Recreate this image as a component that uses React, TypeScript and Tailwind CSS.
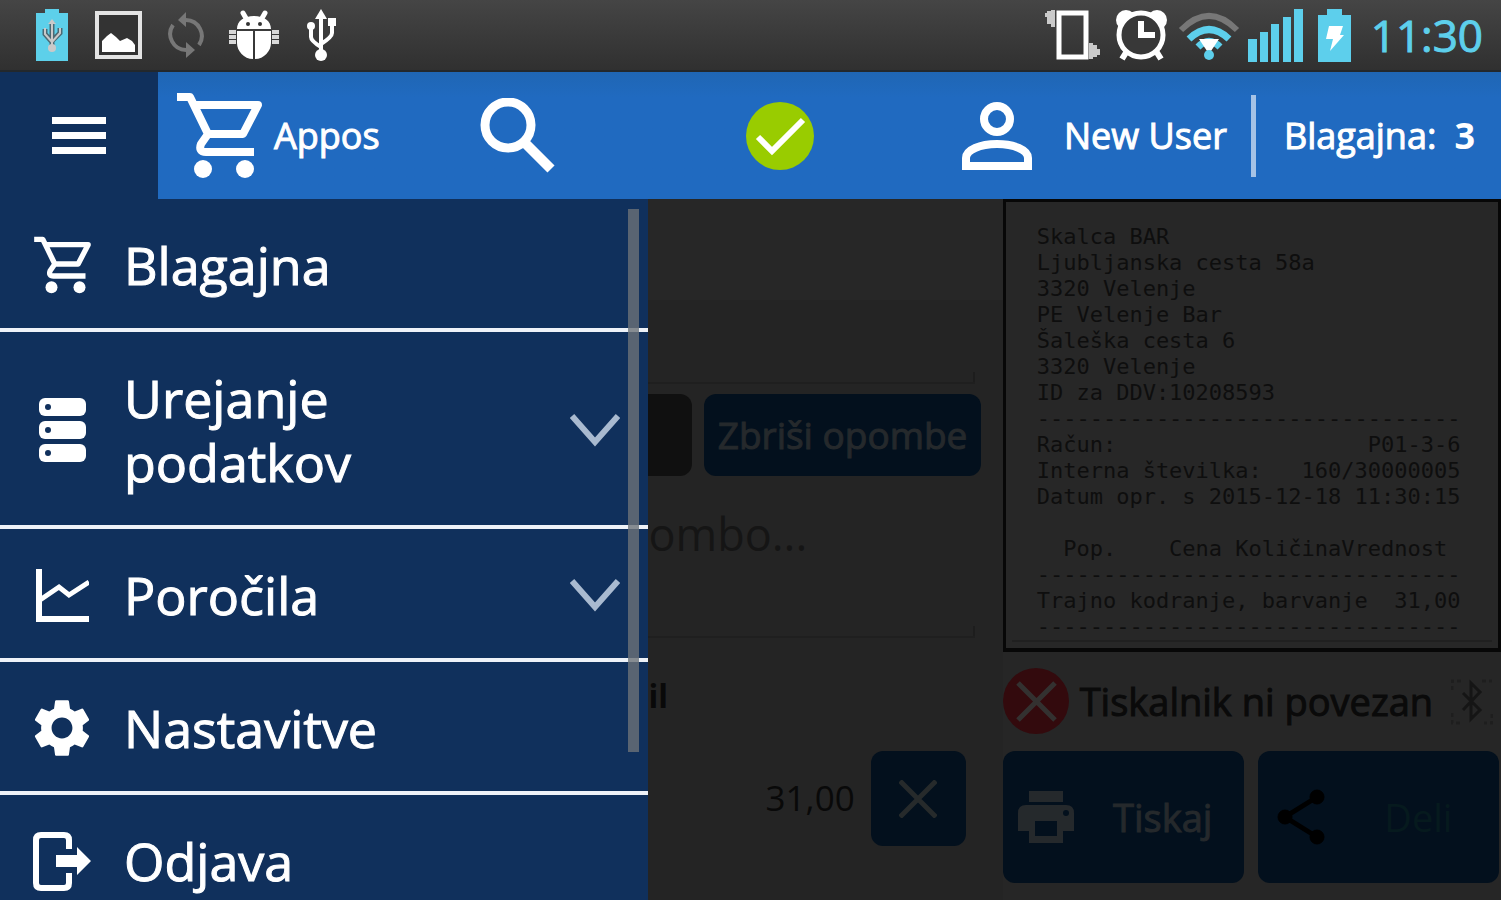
import { ReactNode } from "react";

type MenuItem = {
  label: string;
  icon: ReactNode;
  expandable?: boolean;
};

const RULE = "-".repeat(32);

const receiptLines = [
  "Skalca BAR",
  "Ljubljanska cesta 58a",
  "3320 Velenje",
  "PE Velenje Bar",
  "Šaleška cesta 6",
  "3320 Velenje",
  "ID za DDV:10208593",
  RULE,
  "Račun:                   P01-3-6",
  "Interna številka:   160/30000005",
  "Datum opr. s 2015-12-18 11:30:15",
  "",
  "  Pop.    Cena KoličinaVrednost",
  RULE,
  "Trajno kodranje, barvanje  31,00",
  RULE,
];

function CartIcon({ className }: { className: string }) {
  return (
    <svg viewBox="0 0 85 87" className={className} fill="none" aria-hidden="true">
      <path
        d="M0 5h13l18 37M17 13h64L66 42H31l-7 10q-3 8 5 8h48"
        stroke="currentColor"
        strokeWidth="8"
        strokeLinejoin="round"
      />
      <circle cx="26" cy="77" r="9" fill="currentColor" />
      <circle cx="68" cy="77" r="9" fill="currentColor" />
    </svg>
  );
}

function ServerIcon() {
  return (
    <svg viewBox="0 0 47 64" className="h-16 w-[47px]" aria-hidden="true">
      {[0, 23, 46].map((y) => (
        <g key={y}>
          <rect y={y} width="47" height="18" rx="6" fill="#fff" />
          <circle cx="9" cy={y + 9} r="3" fill="#10305c" />
        </g>
      ))}
    </svg>
  );
}

function ChartIcon() {
  return (
    <svg viewBox="0 0 53 53" className="size-[53px]" fill="none" stroke="#fff" strokeWidth="6" aria-hidden="true">
      <path d="M3 0v50h50" />
      <path d="M4 31L23 18l10 8 20-13" strokeWidth="5" />
    </svg>
  );
}

function GearIcon() {
  return (
    <svg viewBox="2 2 20 20" className="size-[58px]" fill="#fff" aria-hidden="true">
      <path d="M19.14 12.94c.04-.3.06-.61.06-.94 0-.32-.02-.64-.07-.94l2.03-1.58c.18-.14.23-.41.12-.61l-1.92-3.32c-.12-.22-.37-.29-.59-.22l-2.39.96c-.5-.38-1.03-.7-1.62-.94l-.36-2.54c-.04-.24-.24-.41-.48-.41h-3.84c-.24 0-.43.17-.47.41l-.36 2.54c-.59.24-1.13.57-1.62.94l-2.39-.96c-.22-.08-.47 0-.59.22L2.74 8.87c-.12.21-.08.47.12.61l2.03 1.58c-.05.3-.09.63-.09.94s.02.64.07.94l-2.03 1.58c-.18.14-.23.41-.12.61l1.92 3.32c.12.22.37.29.59.22l2.39-.96c.5.38 1.03.7 1.62.94l.36 2.54c.05.24.24.41.48.41h3.84c.24 0 .44-.17.47-.41l.36-2.54c.59-.24 1.13-.56 1.62-.94l2.39.96c.22.08.47 0 .59-.22l1.92-3.32c.12-.22.07-.47-.12-.61l-2.01-1.58zM12 15.6c-1.98 0-3.6-1.62-3.6-3.6s1.62-3.6 3.6-3.6 3.6 1.62 3.6 3.6-1.62 3.6-3.6 3.6z" />
    </svg>
  );
}

function LogoutIcon() {
  return (
    <svg viewBox="0 0 58 59" className="h-[59px] w-[58px]" aria-hidden="true">
      <path
        d="M36 17V8q0-5-5-5H8Q3 3 3 8v43q0 5 5 5h23q5 0 5-5V41"
        fill="none"
        stroke="#fff"
        strokeWidth="6"
      />
      <path d="M23 23h21v-8l14 14-14 14v-8H23z" fill="#fff" />
    </svg>
  );
}

const menuItems: MenuItem[] = [
  { label: "Blagajna", icon: <CartIcon className="h-[58px] w-[57px]" /> },
  { label: "Urejanje podatkov", icon: <ServerIcon />, expandable: true },
  { label: "Poročila", icon: <ChartIcon />, expandable: true },
  { label: "Nastavitve", icon: <GearIcon /> },
  { label: "Odjava", icon: <LogoutIcon /> },
];

function StatusBar() {
  return (
    <div className="flex h-[72px] shrink-0 items-center justify-between border-b-2 border-[#23282c] bg-gradient-to-b from-[#454545] to-[#303030] pr-[18px] pl-9 text-[#5dcfec]">
      <div className="flex items-center">
        <svg viewBox="0 0 32 52" className="h-[52px] w-8" aria-hidden="true">
          <path d="M0 4h9V0h14v4h9v48H0z" fill="#5dd0ea" />
          <g fill="none" stroke="#4b6a74" strokeWidth="5">
            <path d="M16 13v26M9 20v5l7 8M24 19v5l-8 8" />
          </g>
          <g fill="none" stroke="#c9c9c9" strokeWidth="2">
            <path d="M16 12v27M9 19v6l7 8M24 19v5l-8 9" />
          </g>
          <circle cx="16" cy="39" r="4" fill="#c9c9c9" />
          <path d="M12 15l4-5 4 5z" fill="#c9c9c9" />
        </svg>
        <svg viewBox="0 0 47 48" className="ml-[27px] h-12 w-[47px]" aria-hidden="true">
          <rect x="2" y="2" width="43" height="44" fill="#333" stroke="#e4e4e4" strokeWidth="4" />
          <path d="M7 41V30l5-5 4-3 5 4 4 4 7-3 5 3 3 4v7z" fill="#fff" />
        </svg>
        <svg viewBox="0 0 36 48" className="ml-[26px] h-12 w-9" fill="none" aria-hidden="true">
          <path d="M18 39A16 16 0 0 1 5 14M18 9A16 16 0 0 1 31 34" stroke="#777" strokeWidth="4" />
          <path d="M18 1v15l-8-7zM18 31v16l9-8z" fill="#777" />
        </svg>
        <svg viewBox="0 0 50 50" className="ml-[25px] size-[50px]" aria-hidden="true">
          <path d="M14 3l4 7M36 3l-4 7" stroke="#fff" strokeWidth="5" strokeLinecap="round" />
          <path d="M8 19C8 11 15 6 25 6s17 5 17 13zM8 21h16v28C15 49 8 41 8 33zM26 21h16v12c0 8-7 16-16 16z" fill="#fff" />
          <path d="M0 22h7M0 27h7M0 32h7M43 22h7M43 27h7M43 32h7" stroke="#d8d8d8" strokeWidth="4" />
          <circle cx="19" cy="14" r="2" fill="#333" />
          <circle cx="31" cy="14" r="2" fill="#333" />
        </svg>
        <svg viewBox="0 0 30 52" className="ml-7 h-[52px] w-[30px]" fill="none" aria-hidden="true">
          <path d="M14 6v40M4 18v10q0 4 10 10M25 13v11q0 4-11 11" stroke="#fff" strokeWidth="4" />
          <path d="M8 10l6-10 6 10z" fill="#fff" />
          <circle cx="14" cy="46" r="6" fill="#fff" />
          <circle cx="4" cy="17" r="4" fill="#fff" />
          <path d="M21 9h8v8h-8z" fill="#fff" />
        </svg>
      </div>

      <div className="flex items-center">
        <svg viewBox="0 0 55 52" className="h-[52px] w-[55px]" fill="none" aria-hidden="true">
          <rect x="14" y="4" width="27" height="44" stroke="#fff" strokeWidth="5" />
          <path d="M8 1v17M4 2v13M1 4v4M46 34v16M50 36v12M53 40v6" stroke="#cacaca" strokeWidth="4" />
        </svg>
        <svg viewBox="0 0 53 52" className="ml-[15px] h-[52px] w-[53px]" fill="none" aria-hidden="true">
          <path d="M12 42l-5 8M41 42l5 8" stroke="#fff" strokeWidth="6" />
          <circle cx="11" cy="11" r="10" fill="#fff" />
          <circle cx="42" cy="11" r="10" fill="#fff" />
          <circle cx="26" cy="26" r="22" fill="#383838" stroke="#fff" strokeWidth="5" />
          <path d="M26 12v14h14" stroke="#fff" strokeWidth="6" />
        </svg>
        <svg viewBox="0 0 62 50" className="ml-[10px] h-[50px] w-[62px]" fill="none" aria-hidden="true">
          <path d="M3 20Q31-8 59 20" stroke="#777" strokeWidth="6" />
          <path d="M11 29q20-19 40 0" stroke="#5dcfec" strokeWidth="7" />
          <path d="M20 37q11-11 22 0" stroke="#5dcfec" strokeWidth="7" />
          <path d="M21 29h20L31 44z" fill="#fff" />
          <circle cx="31" cy="45" r="5" fill="#5dcfec" />
        </svg>
        <svg viewBox="0 0 55 54" className="ml-2 h-[54px] w-[55px]" fill="#5dcfec" aria-hidden="true">
          <path d="M0 31h9v23H0zM12 24h8v30h-8zM23 16h8v38h-8zM35 9h8v45h-8zM46 1h9v53h-9z" />
        </svg>
        <svg viewBox="0 0 33 53" className="ml-[15px] h-[53px] w-[33px]" aria-hidden="true">
          <path d="M0 6h9V0h15v6h9v47H0z" fill="#5dcfec" />
          <path d="M11 17h14l-3 9h4L12 42l3-12H8z" fill="#fff" />
        </svg>
        <span className="ml-5 text-[44px] leading-none [-webkit-text-stroke:1px]">11:30</span>
      </div>
    </div>
  );
}

function AppBar() {
  return (
    <header className="flex h-[127px] shrink-0 bg-gradient-to-b from-[#1f66b4] via-[#206ac0] via-20% to-[#206ac0] text-4xl text-white [-webkit-text-stroke:1px]">
      <button aria-label="Meni" className="flex w-[158px] shrink-0 flex-col items-center justify-center gap-2 bg-[#10305c]">
        <span className="h-[7px] w-[54px] bg-white" />
        <span className="h-[7px] w-[54px] bg-white" />
        <span className="h-[7px] w-[54px] bg-white" />
      </button>
      <a href="#" className="ml-[19px] flex items-center gap-3">
        <CartIcon className="h-[87px] w-[85px]" />
        Appos
      </a>
      <div className="flex flex-1 items-center pl-[100px]">
        <button aria-label="Iskanje">
          <svg viewBox="0 0 75 76" className="h-[76px] w-[75px]" fill="none" stroke="#fff" aria-hidden="true">
            <circle cx="28" cy="27" r="23" strokeWidth="9" />
            <path d="M46 46l25 25" strokeWidth="10" />
          </svg>
        </button>
        <div className="flex flex-1 justify-center pl-11">
          <svg viewBox="0 0 68 68" className="size-[68px]" fill="none" role="img" aria-label="Povezano">
            <circle cx="34" cy="34" r="34" fill="#99cc00" />
            <path d="M12 35l14 14 31-31" stroke="#fff" strokeWidth="6" />
          </svg>
        </div>
      </div>
      <a href="#" className="flex items-center gap-8">
        <svg viewBox="0 0 70 68" className="h-[68px] w-[70px]" fill="none" stroke="#fff" strokeWidth="8" aria-hidden="true">
          <circle cx="35" cy="17" r="13" />
          <path d="M4 64V56c0-8 14-14 31-14s31 6 31 14v8z" />
        </svg>
        New User
      </a>
      <div className="my-auto ml-6 h-[82px] w-[5px] bg-[#a6c3e6]" />
      <div className="mr-[26px] ml-7 flex items-center gap-[18px]">
        Blagajna: <strong className="[-webkit-text-stroke:0]">3</strong>
      </div>
    </header>
  );
}

function Drawer() {
  return (
    <nav className="relative w-[43.2%] shrink-0 overflow-hidden bg-[#10305c]">
      <ul>
        {menuItems.map((item) => (
          <li key={item.label} className="border-b-4 border-[#eef2f8]">
            <button className="flex w-full items-center pt-[34px] pr-7 pb-[31px] text-left text-[52px] leading-[64px] text-white [-webkit-text-stroke:1px]">
              <span className="flex w-[124px] shrink-0 justify-center">{item.icon}</span>
              <span className="w-[300px]">{item.label}</span>
              {item.expandable && (
                <svg viewBox="0 0 50 34" className="ml-auto h-[34px] w-[50px]" fill="none" aria-hidden="true">
                  <path d="M2 3l23 26L48 3" stroke="#a9bad0" strokeWidth="6" />
                </svg>
              )}
            </button>
          </li>
        ))}
      </ul>
      <div className="absolute top-[10px] right-[9px] h-[543px] w-[11px] bg-[#6b7278]/80" />
    </nav>
  );
}

// bottom edge of a text field, with the short tick on its right end
function FieldEdge() {
  return (
    <div className="mr-7 flex h-3 shrink-0 justify-end border-b-2 border-[#1f1f1f]">
      <span className="w-[2px] bg-[#1d1d1d]" />
    </div>
  );
}

function OrderPanel() {
  return (
    <section className="flex min-w-0 flex-1 flex-col overflow-hidden bg-[#242424] text-[#090909]">
      <div className="h-[101px] shrink-0 bg-[#272727]" />
      <div className="h-[72px] shrink-0" />
      <FieldEdge />
      <div className="mt-[10px] mr-[22px] flex h-[82px] shrink-0 gap-3">
        <button aria-label="Opombe" className="w-11 shrink-0 rounded-r-xl bg-[#101010]" />
        <button className="flex-1 rounded-xl bg-[#03101d] text-[37px] whitespace-nowrap text-[#25292c] [-webkit-text-stroke:1px]">
          Zbriši opombe
        </button>
      </div>
      <textarea
        aria-label="Opomba"
        defaultValue="ombo..."
        className="mt-6 h-[126px] shrink-0 resize-none overflow-hidden text-[45px] leading-[68px] text-[#151515]"
      />
      <FieldEdge />
      <div className="mt-8 text-[32px] leading-[52px] font-bold">il</div>
      <div className="mt-[29px] mr-[37px] flex items-center justify-end gap-4 text-[35px]">
        31,00
        <button aria-label="Odstrani" className="flex size-[95px] items-center justify-center rounded-xl bg-[#03101d]">
          <svg viewBox="0 0 38 38" className="size-[38px]" stroke="#262a2b" strokeWidth="5" aria-hidden="true">
            <path d="M1 1l36 36M37 1L1 37" />
          </svg>
        </button>
      </div>
    </section>
  );
}

function ReceiptPanel() {
  return (
    <aside className="flex w-[33.2%] shrink-0 flex-col overflow-hidden bg-[#262626] text-[38px] text-[#0a0a0a]">
      <div className="border-[3px] border-b-4 border-[#070707] bg-[#272727] px-[6px] pt-[22px]">
        <pre className="pl-[25px] font-['DejaVu_Sans_Mono',monospace] text-[22px] leading-[26px] text-[#0e0e0e]">
          {receiptLines.join("\n")}
        </pre>
        <div className="mb-[6px] h-[2px] bg-[#202020]" />
      </div>
      <div className="mt-4 flex items-center gap-[10px] whitespace-nowrap">
        <svg viewBox="0 0 67 67" className="size-[67px] shrink-0" fill="none" aria-hidden="true">
          <circle cx="33" cy="33" r="33" fill="#330a0d" />
          <path d="M15 15l37 37M52 15L15 52" stroke="#333130" strokeWidth="5" />
        </svg>
        <span className="[-webkit-text-stroke:1px]">Tiskalnik ni povezan</span>
        <svg viewBox="0 0 42 48" className="mr-2 ml-auto h-12 w-[42px] shrink-0" fill="none" stroke="#151515" aria-hidden="true">
          <path d="M12 15l17 17-9 9V5l9 9-17 18" strokeWidth="3" />
          <path d="M1 12V3h10M31 3h10M1 35v10h10M41 36v9h-8" stroke="#1e1e1e" strokeWidth="3" strokeDasharray="4 3" />
        </svg>
      </div>
      <div className="mt-4 mr-[2px] grid grid-cols-2 gap-[14px]">
        <button className="flex h-[132px] items-center rounded-xl bg-[#03101d] pl-[15px] text-[#25292c]">
          <svg viewBox="0 0 56 52" className="h-[52px] w-14" fill="#25292c" aria-hidden="true">
            <path d="M11 0h34v11H11z" />
            <path d="M8 14h40q8 0 8 8v18H45v12H11V40H0V22q0-8 8-8zm9 16v15h22V30z" fillRule="evenodd" />
            <circle cx="48" cy="22" r="3" fill="#03101d" />
          </svg>
          <span className="flex-1 pl-2 text-center [-webkit-text-stroke:1px]">Tiskaj</span>
        </button>
        <button className="flex h-[132px] items-center rounded-xl bg-[#03101d] pl-[18px] text-[#061a1e]">
          <svg viewBox="0 0 50 56" className="h-14 w-[50px]" fill="#000" stroke="#000" aria-hidden="true">
            <path d="M41 8L9 28l32 20" fill="none" strokeWidth="5" />
            <circle cx="41" cy="8" r="7" />
            <circle cx="9" cy="28" r="7" />
            <circle cx="41" cy="48" r="7" />
          </svg>
          <span className="flex-1 pl-3 text-center">Deli</span>
        </button>
      </div>
    </aside>
  );
}

export default function App() {
  return (
    <div className="flex h-screen flex-col overflow-hidden bg-[#242424] font-['Open_Sans',sans-serif]">
      <StatusBar />
      <AppBar />
      <main className="flex min-h-0 flex-1">
        <Drawer />
        <OrderPanel />
        <ReceiptPanel />
      </main>
    </div>
  );
}
